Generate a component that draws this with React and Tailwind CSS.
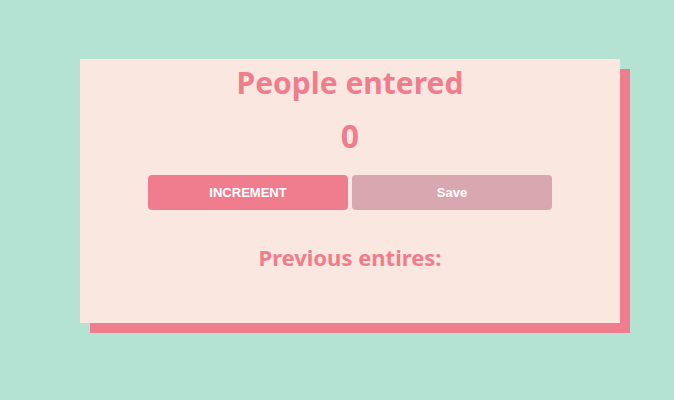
export default function App() {
  return (
    <div className="w-[674px] h-[400px] bg-[#b4e2d3] pt-[59px] pl-[80px]">
      <div className="w-[540px] h-[264px] bg-[#fae7e0] shadow-[10px_10px_0_#ef7d8e] flex flex-col items-center font-['Noto_Sans',sans-serif] text-[#ef7d8e]">
        <h1 className="mt-[2px] text-[30px] leading-[44px] font-bold">People entered</h1>
        <h2 className="mt-[9px] text-[32px] leading-[44px] font-bold">0</h2>
        <div className="mt-[17px] flex gap-[4px]">
          <button className="w-[200px] h-[35px] rounded-[4px] bg-[#ef7d8e] text-white text-[13px] font-bold font-['Liberation_Sans',sans-serif]">INCREMENT</button>
          <button className="w-[200px] h-[35px] rounded-[4px] bg-[#d9a7b0] text-white text-[13px] font-bold font-['Liberation_Sans',sans-serif]">Save</button>
        </div>
        <h3 className="mt-[32px] text-[22px] leading-[30px] font-bold">Previous entires:</h3>
      </div>
    </div>
  );
}
